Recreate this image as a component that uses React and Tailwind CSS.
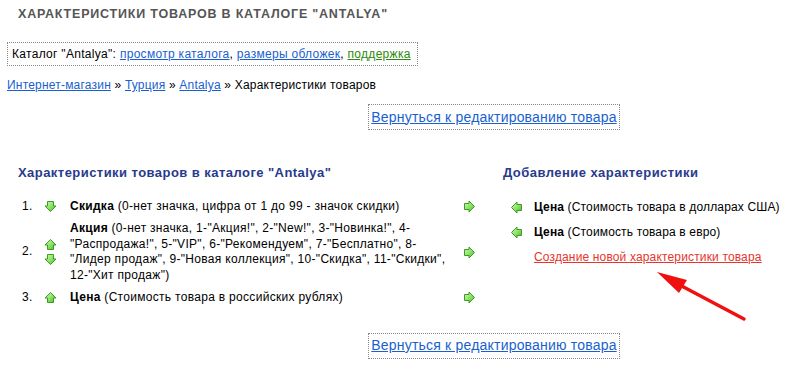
import React from "react";

// green arrow icons drawn as small svgs
const Arrow = ({ dir }) => {
  const paths = {
    down: "M3.5 1.5 H9.5 V6 H12 L6.5 11.5 L1 6 H3.5 Z",
    up: "M6.5 1.5 L12 7 H9.5 V11.5 H3.5 V7 H1 Z",
    right: "M1.5 3.5 V9.5 H6 V12 L11.5 6.5 L6 1 V3.5 Z",
    left: "M11.5 3.5 V9.5 H7 V12 L1.5 6.5 L7 1 V3.5 Z",
  };
  const id = `g-${dir}`;
  return (
    <svg width="13" height="13" viewBox="0 0 13 13" className="block shrink-0">
      <defs>
        <linearGradient id={id} x1="0" y1="0" x2="1" y2="1">
          <stop offset="0" stopColor="#d6f7c4" />
          <stop offset="0.5" stopColor="#8ee36a" />
          <stop offset="1" stopColor="#49b824" />
        </linearGradient>
      </defs>
      <path d={paths[dir]} fill={`url(#${id})`} stroke="#3f9a22" strokeWidth="1" />
    </svg>
  );
};

const Link = ({ children, color = "text-[#1a5fd0]" }) => (
  <a href="#" className={`${color} underline`}>
    {children}
  </a>
);

const BackButton = ({ className }) => (
  <div
    className={`ml-[368px] w-[252px] h-[26px] border border-dotted border-[#888] flex items-center justify-center text-[14px] tracking-[0.2px] ${className}`}
  >
    <Link>Вернуться к редактированию товара</Link>
  </div>
);

export default function App() {
  return (
    <div className="relative w-[785px] h-[371px] bg-white overflow-hidden text-[12px] tracking-[0.3px] text-black font-['Liberation_Sans',Arial,sans-serif]">
      <h1 className="pl-[18px] pt-[7px] leading-[14px] text-[12.5px] tracking-[0.8px] font-bold text-[#555]">
        ХАРАКТЕРИСТИКИ ТОВАРОВ В КАТАЛОГЕ "ANTALYA"
      </h1>

      <div className="ml-[7px] mt-[21px] w-[411px] h-[24px] border border-dotted border-[#888] flex items-center pl-[4px]">
        <span>
          Каталог "Antalya": <Link>просмотр каталога</Link>, <Link>размеры обложек</Link>,{" "}
          <Link color="text-[#2e8a0c]">поддержка</Link>
        </span>
      </div>

      <div className="ml-[7px] mt-[12px] leading-[14px] tracking-[0.2px]">
        <Link>Интернет-магазин</Link> » <Link>Турция</Link> » <Link>Antalya</Link> » Характеристики товаров
      </div>

      <BackButton className="mt-[12px]" />

      <div className="flex mt-[35px]">
        {/* left column */}
        <div className="w-[485px]">
          <h2 className="pl-[18px] leading-[16px] text-[13px] tracking-[0.45px] font-bold text-[#283a8c]">
            Характеристики товаров в каталоге "Antalya"
          </h2>
          <div className="pl-[22px] mt-[18px] flex flex-col gap-[6px] leading-[15.75px]">
            <div className="flex items-center">
              <span className="w-[22px]">1.</span>
              <div className="w-[26px] flex flex-col gap-[2px]">
                <Arrow dir="down" />
              </div>
              <div className="w-[393px] whitespace-nowrap">
                <b>Скидка</b> (0-нет значка, цифра от 1 до 99 - значок скидки)
              </div>
              <Arrow dir="right" />
            </div>
            <div className="flex items-center">
              <span className="w-[22px]">2.</span>
              <div className="w-[26px] flex flex-col gap-[2px]">
                <Arrow dir="up" />
                <Arrow dir="down" />
              </div>
              <div className="w-[393px] whitespace-nowrap">
                <b>Акция</b> (0-нет значка, 1-"Акция!", 2-"New!", 3-"Новинка!", 4-
                <br />
                "Распродажа!", 5-"VIP", 6-"Рекомендуем", 7-"Бесплатно", 8-
                <br />
                "Лидер продаж", 9-"Новая коллекция", 10-"Скидка", 11-"Скидки",
                <br />
                12-"Хит продаж")
              </div>
              <Arrow dir="right" />
            </div>
            <div className="flex items-center">
              <span className="w-[22px]">3.</span>
              <div className="w-[26px] flex flex-col gap-[2px]">
                <Arrow dir="up" />
              </div>
              <div className="w-[393px] whitespace-nowrap">
                <b>Цена</b> (Стоимость товара в российских рублях)
              </div>
              <Arrow dir="right" />
            </div>
          </div>
        </div>

        {/* right column */}
        <div className="pl-[18px]">
          <h2 className="leading-[16px] text-[13px] tracking-[0.45px] font-bold text-[#283a8c]">
            Добавление характеристики
          </h2>
          <div className="mt-[18px] pl-[7px] flex flex-col gap-[9px] leading-[16px] tracking-[0.15px] whitespace-nowrap">
            <div className="flex items-center">
              <div className="w-[24px]">
                <Arrow dir="left" />
              </div>
              <div>
                <b>Цена</b> (Стоимость товара в долларах США)
              </div>
            </div>
            <div className="flex items-center">
              <div className="w-[24px]">
                <Arrow dir="left" />
              </div>
              <div>
                <b>Цена</b> (Стоимость товара в евро)
              </div>
            </div>
            <div className="pl-[24px]">
              <Link color="text-[#e8352c]">Создание новой характеристики товара</Link>
            </div>
          </div>
        </div>
      </div>

      <BackButton className="mt-[27px]" />

      {/* red annotation arrow */}
      <svg className="absolute left-0 top-0 pointer-events-none" width="785" height="371">
        <line x1="744" y1="319" x2="676" y2="283" stroke="#f01010" strokeWidth="3.5" strokeLinecap="round" />
        <polygon points="657,272 687,280 679,293" fill="#f01010" />
      </svg>
    </div>
  );
}
